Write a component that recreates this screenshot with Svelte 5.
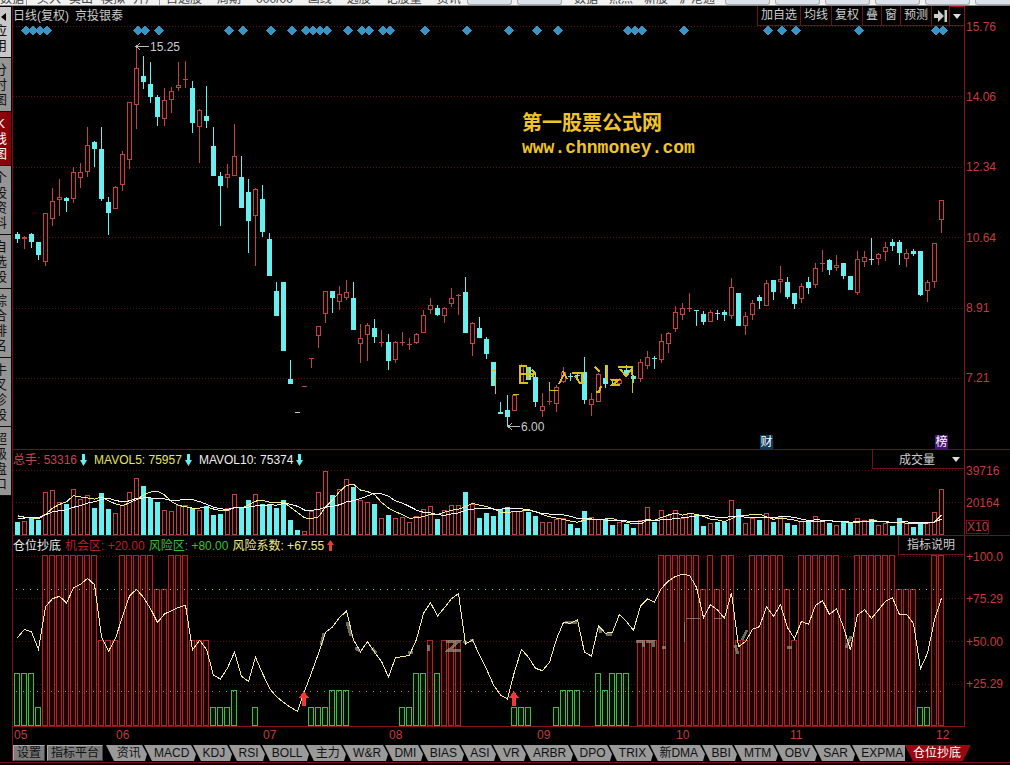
<script>
  const STEP = 7;
  const cx = (i) => 17.5 + STEP * i;
  const pct = (x) => ((x - 13) / 951) * 100 + '%';

  // one entry per day: direction, high, body top, body bottom, low
  const candles = `c232,234,239,243 r236,237,239,249 c233,234,242,248 c242,242,255,260 r213,213,262,266 r188,201,219,226 r179,197,200,216 c197,198,201,212 r167,172,199,203 r163,172,178,188 r127,145,172,177 c141,142,149,167 c127,149,199,201 c197,202,213,235 r186,187,209,209 r151,154,185,191 r102,102,160,169 r47,68,105,129 c56,76,82,89 c62,84,97,103 c95,97,117,126 r88,100,119,126 r87,91,100,113 r62,85,88,91 r61,79,80,88 c81,88,123,133 r109,110,127,163 c86,116,121,128 c127,146,176,176 c172,176,186,226 r164,174,178,188 r124,156,176,176 c156,177,208,208 c179,192,221,253 r188,189,216,266 c185,199,232,237 c233,239,276,276 c282,291,316,316 c282,282,351,351 c360,379,384,384 w412,412,413,413 r386,386,387,387 r358,358,359,368 r326,326,336,348 r291,291,314,323 c291,291,298,313 r286,294,302,310 r280,292,298,300 c282,298,330,330 r324,338,344,363 r323,325,335,361 c319,328,337,343 r330,342,343,347 c334,342,361,370 r341,342,360,363 r332,342,343,346 r338,344,345,350 r333,334,343,344 r310,315,333,333 r298,305,310,314 c305,308,315,316 r307,308,316,323 r288,298,304,307 r294,295,296,315 c277,292,333,333 r322,323,344,356 c317,328,338,338 c337,339,354,359 c362,362,386,386 c402,412,414,414 c395,410,417,427 r394,395,411,411 r364,365,383,383 c367,367,380,380 c374,377,402,407 r393,406,411,417 r382,401,402,405 r385,387,404,412 r367,372,382,383 c373,376,377,381 c374,375,376,381 c357,372,400,404 r393,399,405,416 r373,374,402,402 c365,378,384,388 c379,379,380,384 r378,380,384,384 c365,370,375,375 c375,376,379,383 r359,362,379,382 r351,357,366,369 c356,358,359,369 r334,341,360,363 r332,333,344,353 r306,312,329,332 r303,308,315,320 r293,308,309,312 c310,310,311,326 c311,314,322,325 r310,312,322,322 c310,313,314,320 c310,312,315,321 r278,287,316,319 c293,293,326,326 r312,316,326,335 r300,303,315,320 c295,297,301,309 r280,283,306,306 c280,280,292,300 r266,279,282,293 c277,282,297,299 c293,293,304,309 r283,286,299,303 c277,282,288,294 r263,268,285,288 r250,263,264,272 c259,260,270,275 r255,265,268,271 c263,263,276,279 c276,276,290,290 r251,259,293,295 r251,257,262,267 c238,259,260,265 r253,254,259,265 r242,247,252,261 c239,242,246,251 c240,242,253,265 r249,253,259,267 c249,251,254,256 c251,251,295,296 r280,282,291,302 r243,243,282,288 r200,200,220,233`
    .split(' ')
    .map((s, i) => {
      const [high, top, bottom, low] = s.slice(1).split(',').map(Number);
      return { x: cx(i), kind: s[0], high, top, bottom, low };
    });

  const volumes = [
    216,213,201,210,127,121,157,162,118,146,136,174,130,177,190,166,127,85,108,145,156,180,184,166,166,175,181,168,195,192,175,133,175,151,133,162,162,174,150,210,240,244,184,127,62,135,118,88,111,150,157,163,205,196,205,202,216,198,178,169,208,181,166,166,127,163,204,189,198,178,172,184,184,186,198,216,216,207,205,222,234,183,202,208,208,226,217,223,234,210,172,216,181,196,181,204,190,195,228,219,216,216,151,178,220,204,210,190,216,202,219,225,214,216,199,213,219,225,216,219,205,210,208,226,219,228,205,220,231,222,219,187,118
  ].map((v) => (255 - v) / 3);

  const history = [14, 14, 15, 15, 16, 21, 21, 20, 21];
  function average(n) {
    const all = [...history, ...volumes];
    return volumes
      .map((_, i) => {
        const end = i + history.length + 1;
        const part = all.slice(end - n, end);
        return `${cx(i)},${535 - part.reduce((a, b) => a + b, 0) / n}`;
      })
      .join(' ');
  }
  const ma5 = average(5);
  const ma10 = average(10);

  // runs of equal columns: first day, last day, level
  const runs = [
    [0,2,30],[3,3,10],[4,11,100],[12,14,50],[15,19,100],[20,21,80],[22,24,100],[25,27,50],[28,30,10],[31,31,20],[34,34,10],
    [42,44,10],[45,47,20],[55,56,10],[57,58,30],[59,59,50],[60,60,30],[61,63,50],[71,73,10],[77,77,10],[78,80,20],[83,83,30],
    [84,84,20],[85,87,30],[89,91,50],[92,97,100],[98,98,80],[99,99,100],[100,100,80],[101,102,100],[103,104,50],[105,109,100],
    [110,110,80],[111,111,50],[112,117,100],[118,118,80],[119,119,50],[120,125,100],[126,128,80],[129,130,10],[131,132,100]
  ];
  const columns = runs.flatMap(([a, b, level]) =>
    Array.from({ length: b - a + 1 }, (_, k) => ({
      x: cx(a + k) - 3,
      y: Math.round(725 - level * 1.69) - 0.5,
      level
    }))
  );

  const risk = [
    563,538,546,598,470,446,439,459,414,403,385,404,560,604,565,500,438,418,442,476,517,492,482,472,466,600,571,598,676,687,654,606,679,694,622,670,715,740,757,772,784,724,668,610,547,531,503,483,570,605,575,606,634,681,623,620,616,568,490,458,498,473,446,431,582,570,615,657,705,735,747,665,598,622,655,662,637,567,517,520,510,607,618,527,550,546,493,515,541,468,447,457,415,393,379,373,376,412,503,464,480,505,428,590,575,538,530,470,499,464,533,566,514,523,466,452,493,476,532,600,495,479,505,480,454,444,494,493,521,656,610,510,444
  ];
  const riskLine = risk.map((v, i) => `${cx(i)},${450 + v / 3}`).join(' ');

  const diamonds = [25,32,39,46,137,144,158,228,242,270,291,305,312,319,326,347,361,368,382,389,424,466,508,536,557,627,634,641,683,767,781,795,858,935,942];
  const months = [['05',13],['06',115],['07',262],['08',388],['09',536],['10',675],['11',789],['12',935]];
  const prices = ['15.76','14.06','12.34','10.64','8.91','7.21'];
  const levels = ['+100.0','+75.29','+50.00','+25.29'];
  const side = ['应用','分时图','K线图','个股资料','自选股','综合排名','牛叉诊股','超级盘口'];
  const tools = ['加自选','均线','复权','叠','窗','预测'];
  const tabs = ['资讯','MACD','KDJ','RSI','BOLL','主力','W&R','DMI','BIAS','ASI','VR','ARBR','DPO','TRIX','新DMA','BBI','MTM','OBV','SAR','EXPMA','仓位抄底'];
  const menu = [['数据'],['买入','卖出','模拟','开户'],['自选股','周期','000/00','画线','选股','记股量','资讯']];
</script>

{#snippet down()}
  <svg class="mark" width="7" height="12" viewBox="0 0 7 12" aria-hidden="true"><path d="M2 0h3v6h2L3.500 12 0 6h2z" fill="#68f0f0" /></svg>
{/snippet}
{#snippet caret()}
  <svg width="8" height="5" viewBox="0 0 8 5" aria-hidden="true"><path d="M0 0h8L4 5z" fill="#ddd" /></svg>
{/snippet}

<div class="app">
  <header class="menu">
    {#each menu as group}
      <div class="group">{#each group as item}<span>{item}</span>{/each}</div>
    {/each}
    <div class="plates"><i></i><i></i></div>
    <div class="group last"><span>数据</span><span>热点</span><span>新股</span><span>沪港通</span></div>
    <div class="plates right"><i></i><i></i><i></i><i></i><i></i><i></i></div>
  </header>

  <div class="body">
    <nav class="side">
      {#each side as name, i}
        <button class:first={i === 0} class:active={i === 2} aria-label={name}>
          <span>
            {#if i === 0}<svg class="back" width="5" height="8" viewBox="0 0 5 8" aria-hidden="true"><path d="M5 0v8L0 4z" /></svg>{/if}
            {#each name as ch}<b>{ch}</b>{/each}
          </span>
        </button>
      {/each}
    </nav>

    <main>
      <section class="panel price">
        <div class="plot">
          <div class="bar">
            <h1>日线(复权)<span>京投银泰</span></h1>
            <div class="tools">
              {#each tools as t}<button>{t}</button>{/each}
              <button class="end" aria-label="最新"><svg width="13" height="12" viewBox="0 0 13 12" aria-hidden="true"><path d="M0 4h4V0l6 6-6 6V8H0zM10.500 0H13v12h-2.500z" fill="#ccc" /></svg></button>
              <button class="more" aria-label="更多">{@render caret()}</button>
            </div>
          </div>
          <div class="canvas">
            <svg class="chart p" viewBox="13 26 951 423" preserveAspectRatio="none" aria-hidden="true">
              {#each [26.5, 96.5, 167.5, 237.5, 308.5, 378.5] as y}<path class="grid" d="M13 {y}H964" />{/each}
              {#each diamonds as x}<path d="M{x - 4.5} 30.500l5-5 5 5-5 5z" fill="#3a94c4" />{/each}
              <path d="M25 30.500h21M137 30.500h7M305 30.500h21M361 30.500h7M382 30.500h7M627 30.500h14M935 30.500h7" stroke="#3a94c4" stroke-width="2" />
              {#each candles as c}
                {#if c.kind === 'r'}
                  <path class="up" d="M{c.x} {c.high}V{c.top}M{c.x} {c.bottom}V{c.low}" />
                  {#if c.bottom - c.top < 2}
                    <path class="up" d="M{c.x - 2.5} {c.top + 0.5}h5" />
                  {:else}
                    <rect class="up" x={c.x - 2} y={c.top + 0.5} width="4" height={c.bottom - c.top - 1} />
                  {/if}
                {:else}
                  <path d="M{c.x} {c.high}V{c.low}" stroke="#68f0f0" />
                  <rect x={c.x - 2.5} y={c.top} width="5" height={c.bottom - c.top} fill={c.kind === 'w' ? '#ccc' : '#68f0f0'} />
                {/if}
              {/each}
              <g stroke="#d8c020" fill="none">
                <path d="M519.500 365v18h8M519 365.500h8M519 373.500h15M528 367v13M532 370l3 3-3 4" stroke-width="2" />
                <path d="M495.500 375v19M492 370h4M513 394.500h6M549 390.500h9M549.500 382v9" />
                <path d="M559 384l5-10M563 371l4 8M572 372.500h12M575 376l5 7h4M582 372v10" stroke-width="2" />
                <path d="M595 367l5 5M596 392h3l2-6M606.500 365v16M611 379.500h8l-6 5h7" stroke-width="2" />
                <path d="M618 366.500h14v8M620 369l6 7 6-7" stroke-width="2" />
                <path d="M632.500 375v18" />
              </g>
              <path d="M136.500 46.500H149M140 43.500l-4 3 4 3M508.500 426.500H520M512 423.500l-4 3 4 3" stroke="#bbb" fill="none" />
            </svg>
            <span class="note" style:left={pct(150)} style:top="14px">15.25</span>
            <span class="note" style:left={pct(521)} style:top="394px">6.00</span>
            <span class="badge" style:left={pct(760)}>财</span>
            <span class="badge purple" style:left={pct(935)}>榜</span>
            <p class="brand" style:left={pct(522)}>第一股票公式网<span>www.chnmoney.com</span></p>
          </div>
        </div>
        <div class="axis">{#each prices as p}<span>{p}</span>{/each}</div>
      </section>

      <section class="panel vol">
        <div class="plot">
          <div class="bar">
            <p class="read wide">
              <span class="r">总手: 53316{@render down()}</span>
              <span class="y">MAVOL5: 75957{@render down()}</span>
              <span>MAVOL10: 75374{@render down()}</span>
            </p>
            <label class="pick">
              <select aria-label="副图指标"><option>成交量</option></select>
              {@render caret()}
            </label>
          </div>
          <svg class="chart v" viewBox="13 469 951 66" preserveAspectRatio="none" aria-hidden="true">
            <path class="grid" d="M13 470.500H964M13 502.500H964" />
            {#each volumes as v, i}
              {#if 'cw'.includes(candles[i].kind)}
                <rect x={cx(i) - 2.5} y={535 - Math.round(v)} width="5" height={Math.round(v)} fill="#68f0f0" />
              {:else}
                <rect class="up" x={cx(i) - 2} y={535.5 - Math.round(v)} width="4" height={Math.round(v) - 1} />
              {/if}
            {/each}
            <polyline points={ma5} stroke="#eeee90" fill="none" />
            <polyline points={ma10} stroke="#f4f4f4" fill="none" />
          </svg>
        </div>
        <div class="axis"><span>39716</span><span>20164</span><span class="unit">X10</span></div>
      </section>

      <section class="panel risk">
        <div class="plot">
          <div class="bar">
            <p class="read">
              <span>仓位抄底</span>
              <span class="r deep">机会区: +20.00</span>
              <span class="g">风险区: +80.00</span>
              <span class="y pale">风险系数: +67.55<svg class="mark up-mark" width="7" height="11" viewBox="0 0 7 11" aria-hidden="true"><path d="M2 11V5H0l3.500-5L7 5H5v6z" fill="#e04040" /></svg></span>
            </p>
            <button class="explain">指标说明</button>
          </div>
          <svg class="chart k" viewBox="13 555 951 171" preserveAspectRatio="none" aria-hidden="true">
            <path class="grid" d="M13 556.500H964M13 598.500H964M13 641.500H964M13 684.500H964" />
            {#each columns as c}
              <rect x={c.x} y={c.y} width="5" height={725 - c.y} class={c.level > 30 && c.level !== 30 ? 'hot' : 'cool'} />
            {/each}
            <path d="M16 589.500H946" stroke="#70e070" stroke-dasharray="1 6" />
            <path d="M16 691H946" stroke="#f06060" stroke-dasharray="1 6" />
            <g stroke="#999988" fill="none" opacity=".7" stroke-width="3">
              <path d="M347 622l4 14M355 648l5 3M372 648l4 5M408 652h5M428 645v6M464 641l3 3M470 640h4M565 622h12M599 627l2 6M606 634h6" />
              <path d="M446 641h13l-10 9h12M636 641h7v6M646 641h7v6M662 647h4M321 645l3-12M735 645l3 9M742 640l5-10M787 647h5M846 648l5-12" />
              <path d="M686 618.500h14M714 618.500h8M684.500 622v20" stroke-width="1" />
            </g>
            <polyline points={riskLine} stroke="#f4eca0" fill="none" />
            {#each [304, 514] as x}
              <path d="M{x} 691l5 7h-3v8h-4v-8h-3z" fill="#f03838" />
            {/each}
          </svg>
        </div>
        <div class="axis">{#each levels as p}<span>{p}</span>{/each}</div>
      </section>

      <div class="dates">
        <div>{#each months as [m, x]}<span style:left={pct(x)}>{m}</span>{/each}</div>
      </div>

      <nav class="tabs">
        <button class="tool">设置</button>
        <button class="tool">指标平台</button>
        <svg class="wedge" width="10" height="16" viewBox="0 0 10 16" aria-hidden="true"><path d="M0 0h1l8 16H0z" /></svg>
        {#each tabs as t, i}
          {#if i > 0 && i < tabs.length - 1}
            <svg class="wedge" width="10" height="16" viewBox="0 0 10 16" aria-hidden="true"><path d="M0 0h2l8 16H3l2-7z" /></svg>
          {/if}
          <button class:current={i === tabs.length - 1}>{t}</button>
        {/each}
      </nav>
    </main>
  </div>
</div>

<style>
  :global(body) { background: #000; }
  .app {
    min-height: 100vh;
    background: #000;
    color: #ccc;
    font: 12px/14px "Liberation Sans", "Noto Sans CJK SC", sans-serif;
    overflow: hidden;
  }
  button, select {
    font: inherit;
    color: inherit;
    background: none;
    border: 0;
    margin: 0;
    padding: 0;
    white-space: nowrap;
  }
  h1, p { margin: 0; font: inherit; }

  .menu {
    display: flex;
    align-items: flex-end;
    height: 5px;
    overflow: hidden;
    background: #f2f2f2;
    border-bottom: 1px solid #888;
    color: #444;
    white-space: nowrap;
  }
  .group { display: flex; gap: 8px; line-height: 12px; padding: 0 6px; border-right: 1px solid #999; }
  .group:first-child { padding: 0 2px 0 0; margin-right: 4px; }
  .group:nth-child(2) { padding-right: 2px; }
  .group:nth-child(3) { gap: 15px; border: 0; }
  .plates { display: flex; gap: 5px; margin-right: 6px; }
  .plates i { width: 43px; height: 4px; border: 1px solid #aaa; border-top: 0; border-radius: 0 0 3px 3px; background: #dbe2e9; }
  .plates.right { margin: 0 -10px 0 auto; }
  .group.last { border: 0; gap: 11px; }

  .body { display: flex; padding-bottom: 1px; border-bottom: 1px solid #701018; }
  .side { width: 11px; flex: none; padding-top: 12px; border-right: 1px solid #000; }
  .side button {
    display: flex;
    justify-content: flex-end;
    width: 11px;
    padding: 4px 4px 4px 0;
    overflow: hidden;
    background: #959595;
    border-bottom: 1px solid #111;
    color: #111;
    font-size: 13px;
    line-height: 15px;
  }
  .side span { display: block; flex: none; }
  .side b { display: block; font-weight: 400; text-align: center; }
  .side .first { background: #c8c8c8; margin-top: -11px; }
  .side .back { display: block; margin: 2px 0 2px 7px; }
  .side .active { background: #8a0008; color: #fff; }

  main { flex: 1; min-width: 0; border-left: 1px solid #701018; }
  .panel { display: grid; grid-template-columns: minmax(0, 1fr) 46px; border-bottom: 1px solid #701018; }
  .bar { display: flex; justify-content: space-between; height: 20px; line-height: 20px; }
  .bar h1 span { margin-left: 6px; }
  .tools { display: flex; height: 19px; line-height: 19px; border-bottom: 1px solid #701018; }
  .tools button { padding: 0 3px; border-left: 1px solid #701018; }
  .tools .end { padding: 1px 2px 0; line-height: 0; }
  .tools .more { border-top: 1px solid #a01018; line-height: 0; }
  .chart { display: block; width: 100%; shape-rendering: crispEdges; }
  .chart.p { height: 423px; }
  .chart.v { height: 66px; }
  .chart.k { height: 171px; }
  .grid { stroke: #581414; stroke-dasharray: 1 2; fill: none; }
  .up { stroke: #c04444; fill: none; }
  rect.up { fill: #120000; }
  .hot { stroke: #b02424; fill: #200000; }
  .cool { stroke: #46b846; fill: #001200; }

  .canvas { position: relative; }
  .note, .badge, .brand { position: absolute; }
  .badge { top: 409px; width: 13px; line-height: 14px; background: #0c3a5c; color: #fff; text-align: center; }
  .badge.purple { background: #4c1478; }
  .brand {
    top: 84px;
    color: #f0c428;
    font: 600 20px/24px "Noto Sans CJK SC", sans-serif;
    white-space: nowrap;
  }
  .brand span { display: block; font: bold 18px/28px "Liberation Mono", monospace; }

  .axis { display: flex; flex-direction: column; justify-content: space-between; padding-left: 1px; border-left: 1px solid #901018; color: #c43c3c; }
  .price .axis { padding-top: 14px; padding-bottom: 64px; }
  .vol .axis { justify-content: flex-start; gap: 18px; padding-top: 14px; }
  .vol .axis .unit { align-self: flex-start; margin-top: -8px; border: 1px solid #701018; line-height: 12px; }
  .risk { border-bottom: 0; }
  .risk .plot { border-bottom: 1px solid #901018; }
  .risk .axis { padding-top: 14px; padding-bottom: 36px; }

  .vol .bar, .risk .bar { height: 19px; }
  .read { display: flex; gap: 4px; color: #eee; white-space: nowrap; }
  .wide { gap: 7px; }
  .mark { margin-left: 3px; vertical-align: -2px; }
  .up-mark { vertical-align: -1px; }
  .r { color: #c84450; }
  .deep { color: #b82020; }
  .g { color: #38c038; }
  .y { color: #e4e464; }
  .pale { color: #eeee88; }
  .pick { display: flex; align-items: center; width: 92px; box-sizing: border-box; padding-right: 4px; border: solid #701018; border-width: 0 0 1px 1px; }
  .pick select { flex: 1; min-width: 0; appearance: none; padding-left: 26px; height: 18px; }
  .pick option { background: #000; }
  .explain { padding: 0 9px 0 8px; border: solid #701018; border-width: 0 0 1px 1px; line-height: 18px; color: #ccc; }

  .dates { padding-right: 46px; color: #c43c3c; }
  .dates div { position: relative; height: 18px; }
  .dates span { position: absolute; top: 0; padding: 1px 0 0 1px; }

  .tabs { display: flex; height: 16px; margin-right: 39px; line-height: 16px; color: #111; }
  .tabs button { flex: 1 1 auto; padding: 0 1px; background: #9a9a9a; }
  .tabs .tool { flex: none; padding: 0 3px; margin-right: 2px; background: #7c7c7c; border: 1px solid #aaa; border-color: #aaa #444 #444 #aaa; line-height: 14px; }
  .tabs .wedge { flex: none; background: #9a9a9a; }
  .tabs .current { flex: none; padding: 0 10px 0 8px; background: #980810; color: #fff; clip-path: polygon(0 0, 100% 0, calc(100% - 8px) 100%, 8px 100%); }
</style>
